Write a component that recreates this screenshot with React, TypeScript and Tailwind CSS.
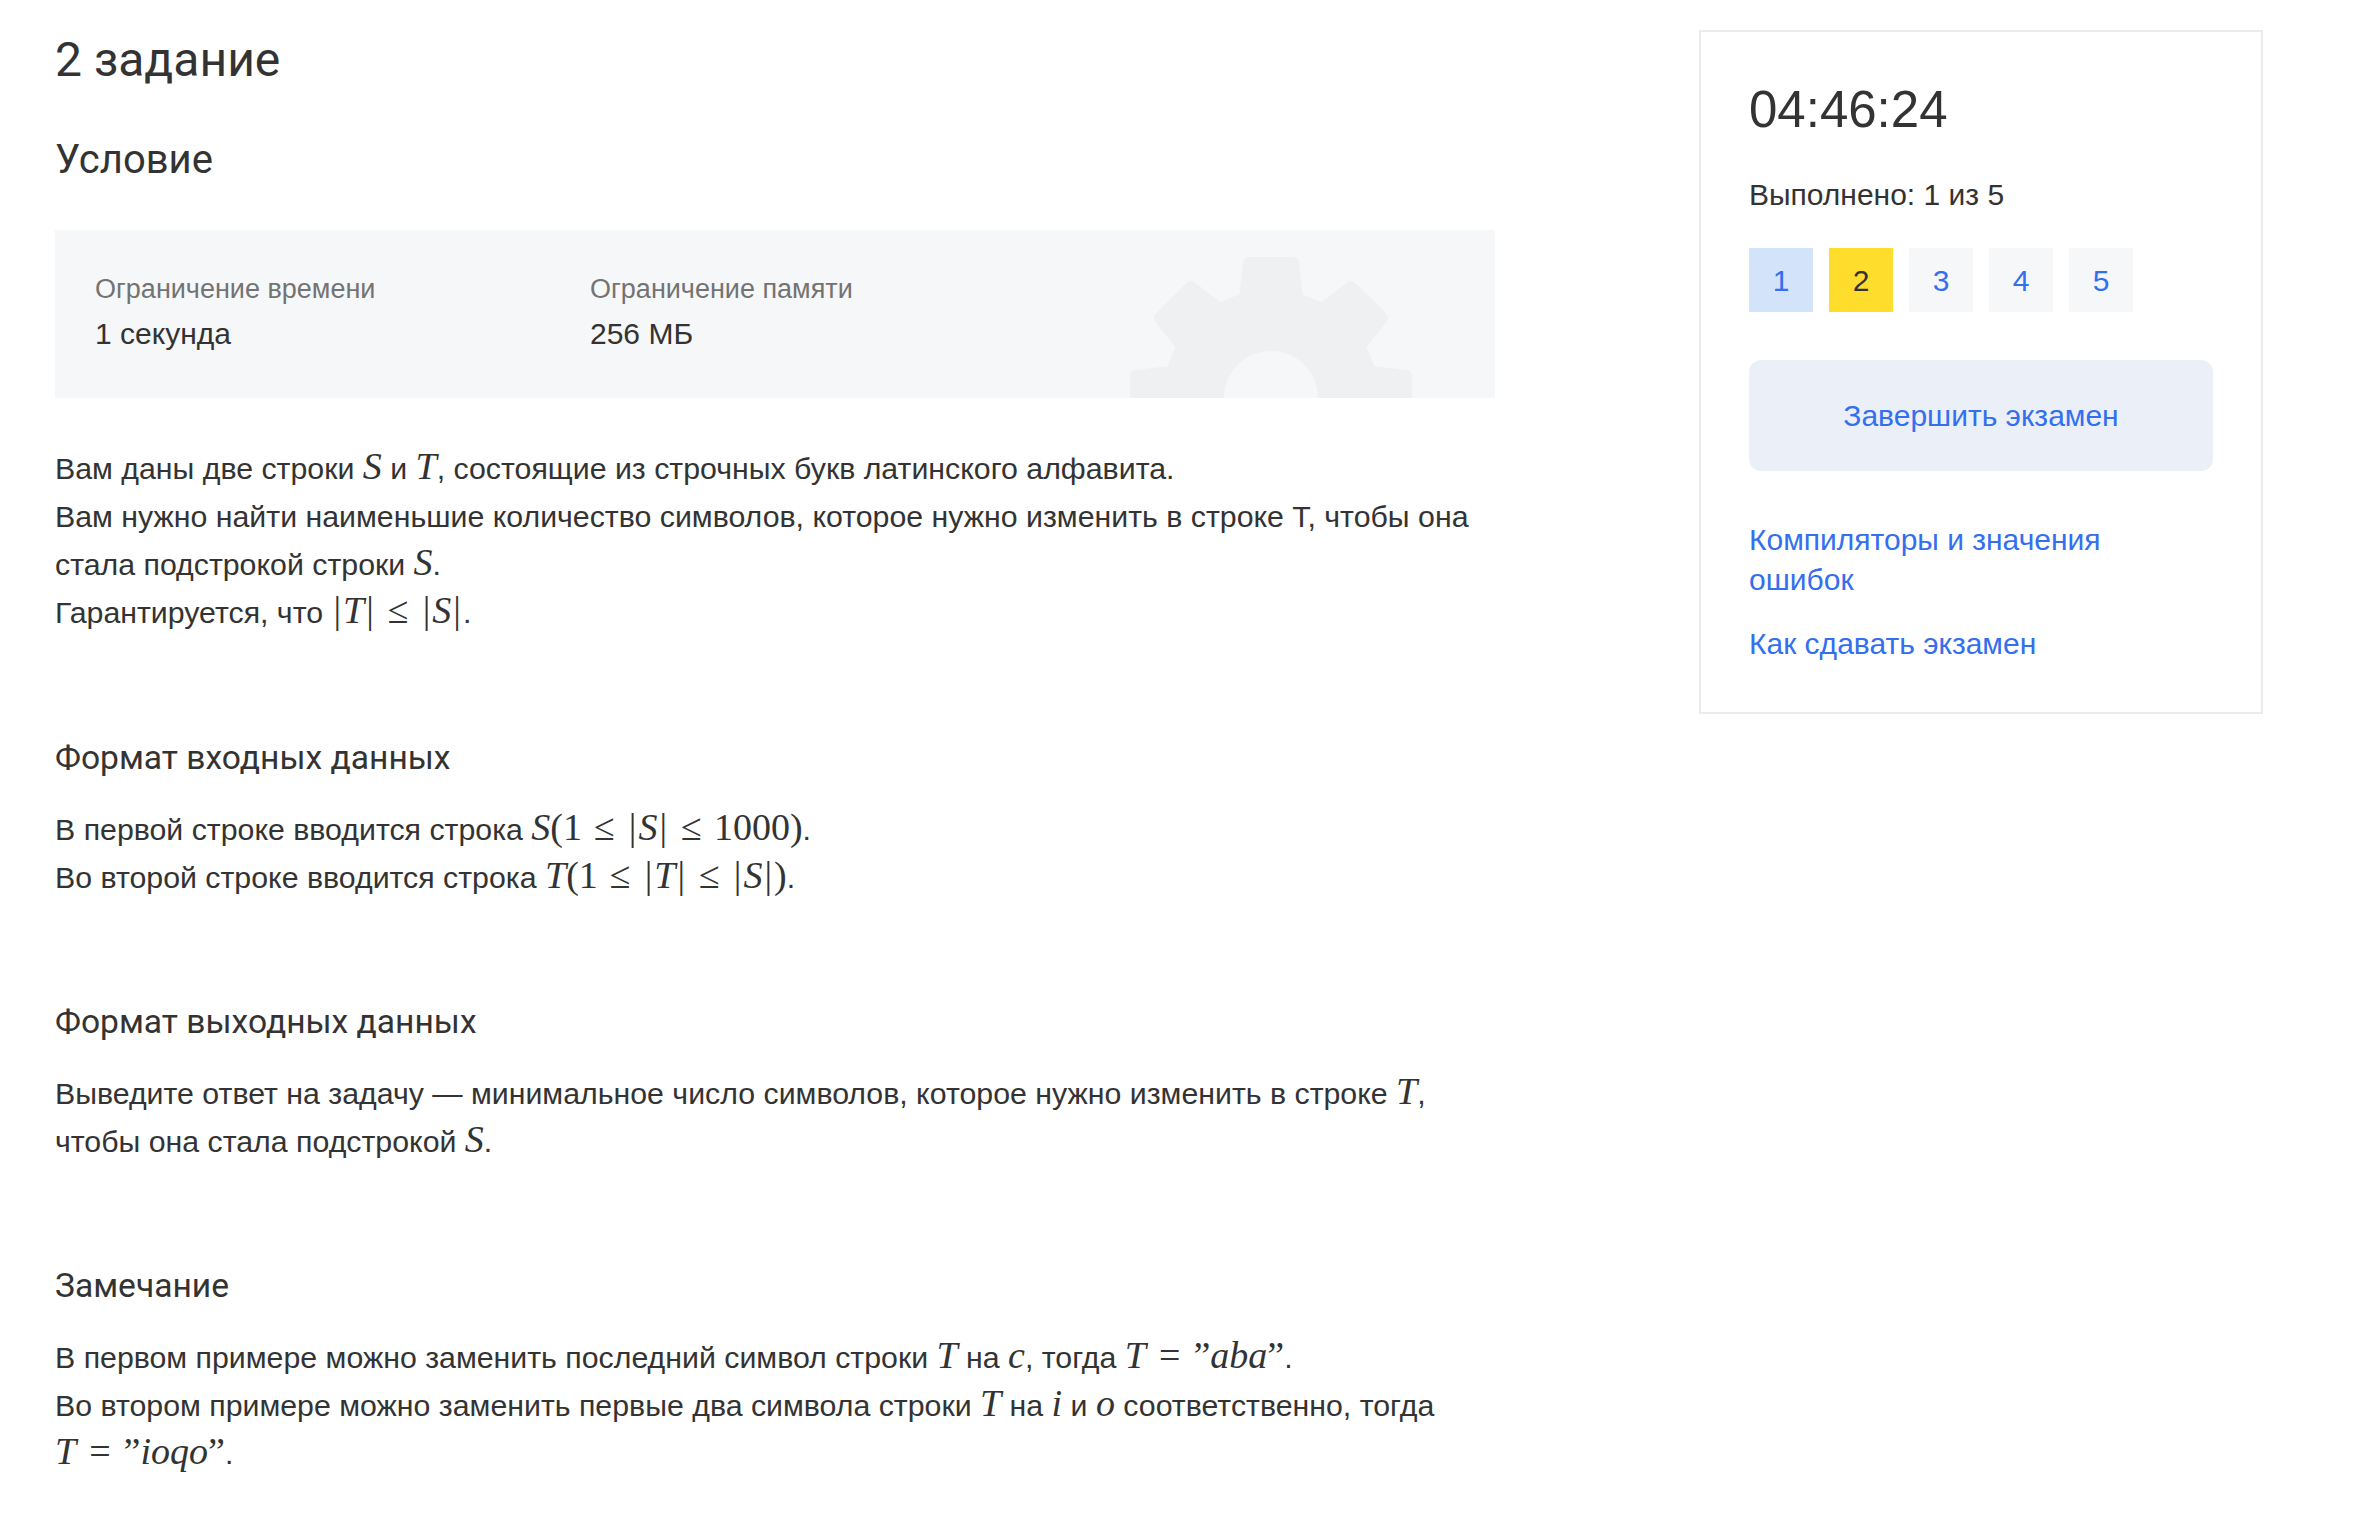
import React from "react";

const M = ({ children }: { children: React.ReactNode }) => (
  <span className="font-['Liberation_Serif',serif] italic text-[38px] leading-none">{children}</span>
);
const R = ({ children, cls = "" }: { children: React.ReactNode; cls?: string }) => (
  <span className={"font-['Liberation_Serif',serif] text-[38px] leading-none " + cls}>{children}</span>
);
const Bar = () => <R cls="mx-[2px]">|</R>;
const Le = () => <R cls="mx-[12px]">≤</R>;
const Eq = () => <R cls="mx-[13px]">=</R>;

function Gear() {
  const teeth = [0, 45, 90, 135, 180, 225, 270, 315];
  return (
    <svg
      className="absolute left-[1071px] top-[23px]"
      width="290"
      height="290"
      viewBox="-145 -145 290 290"
    >
      <circle cx="0" cy="0" r="108" fill="#eff0f2" />
      {teeth.map((a) => (
        <polygon
          key={a}
          points="-26,-100 -22,-135 22,-135 26,-100"
          fill="#eff0f2"
          stroke="#eff0f2"
          strokeWidth="12"
          strokeLinejoin="round"
          transform={`rotate(${a})`}
        />
      ))}
      <circle cx="0" cy="0" r="47" fill="#f6f7f8" />
    </svg>
  );
}

const H3 = ({ children }: { children: React.ReactNode }) => (
  <h3 className="font-['Roboto',sans-serif] text-[33.6px] leading-[48px] text-[#333333] font-normal">{children}</h3>
);

const P = ({ children, cls = "" }: { children: React.ReactNode; cls?: string }) => (
  <p className={"whitespace-nowrap text-[30.3px] leading-[48px] text-[#333333] " + cls}>{children}</p>
);

export default function App() {
  return (
    <div className="min-h-[1519px] w-full bg-white font-['Liberation_Sans',Arial,sans-serif] text-[#333333]">
      <div className="flex gap-[204px] pl-[55px]">
        {/* Left column */}
        <div className="w-[1440px] shrink-0 pb-[40px]">
          <h1 className="mt-[32px] font-['Roboto',sans-serif] text-[48px] leading-[56px] font-normal text-[#333333]">
            2 задание
          </h1>
          <h2 className="mt-[46px] font-['Roboto',sans-serif] text-[40px] leading-[52px] font-normal text-[#333333]">
            Условие
          </h2>

          <div className="relative mt-[44px] h-[168px] overflow-hidden bg-[#f6f7f8]">
            <Gear />
            <div className="relative grid grid-cols-[495px_1fr] pl-[40px] pt-[41px]">
              <div>
                <div className="text-[27px] leading-[36px] text-[#737373]">Ограничение времени</div>
                <div className="mt-[7px] text-[30px] leading-[40px] text-[#333333]">1 секунда</div>
              </div>
              <div>
                <div className="text-[27px] leading-[36px] text-[#737373]">Ограничение памяти</div>
                <div className="mt-[7px] text-[30px] leading-[40px] text-[#333333]">256 МБ</div>
              </div>
            </div>
          </div>

          <P cls="mt-[47px]">
            Вам даны две строки <M>S</M> и <M>T</M>, состоящие из строчных букв латинского алфавита.
            <br />
            Вам нужно найти наименьшие количество символов, которое нужно изменить в строке T, чтобы она
            <br />
            стала подстрокой строки <M>S</M>.
            <br />
            Гарантируется, что <Bar />
            <M>T</M>
            <Bar />
            <Le />
            <Bar />
            <M>S</M>
            <Bar />.
          </P>

          <div className="mt-[97px]">
            <H3>Формат входных данных</H3>
          </div>
          <P cls="mt-[24px]">
            В первой строке вводится строка <M>S</M>
            <R>(1</R>
            <Le />
            <Bar />
            <M>S</M>
            <Bar />
            <Le />
            <R>1000)</R>.
            <br />
            Во второй строке вводится строка <M>T</M>
            <R>(1</R>
            <Le />
            <Bar />
            <M>T</M>
            <Bar />
            <Le />
            <Bar />
            <M>S</M>
            <Bar />
            <R>)</R>.
          </P>

          <div className="mt-[96px]">
            <H3>Формат выходных данных</H3>
          </div>
          <P cls="mt-[24px]">
            Выведите ответ на задачу — минимальное число символов, которое нужно изменить в строке <M>T</M>,
            <br />
            чтобы она стала подстрокой <M>S</M>.
          </P>

          <div className="mt-[96px]">
            <H3>Замечание</H3>
          </div>
          <P cls="mt-[24px]">
            В первом примере можно заменить последний символ строки <M>T</M> на <M>c</M>, тогда <M>T</M>
            <Eq />
            <R>”</R>
            <M>aba</M>
            <R>”</R>.
            <br />
            Во втором примере можно заменить первые два символа строки <M>T</M> на <M>i</M> и <M>o</M>{" "}
            соответственно, тогда
            <br />
            <M>T</M>
            <Eq />
            <R>”</R>
            <M>ioqo</M>
            <R>”</R>.
          </P>
        </div>

        {/* Sidebar */}
        <aside className="mt-[30px] w-[564px] shrink-0 self-start border-2 border-[#ebebeb] px-[48px] pt-[48px] pb-[48px]">
          <div className="text-[51px] leading-[60px] text-[#333333]">04:46:24</div>
          <div className="mt-[35px] text-[30px] leading-[40px] text-[#333333]">Выполнено: 1 из 5</div>
          <div className="mt-[33px] flex gap-[16px]">
            <div className="flex h-[64px] w-[64px] items-center justify-center bg-[#d2e3fa] text-[30px] text-[#336fee]">1</div>
            <div className="flex h-[64px] w-[64px] items-center justify-center bg-[#ffdd2d] text-[30px] text-[#333333]">2</div>
            <div className="flex h-[64px] w-[64px] items-center justify-center bg-[#f6f7f8] text-[30px] text-[#336fee]">3</div>
            <div className="flex h-[64px] w-[64px] items-center justify-center bg-[#f6f7f8] text-[30px] text-[#336fee]">4</div>
            <div className="flex h-[64px] w-[64px] items-center justify-center bg-[#f6f7f8] text-[30px] text-[#336fee]">5</div>
          </div>
          <button className="mt-[48px] flex h-[111px] w-full items-center justify-center rounded-[12px] bg-[#ebf0f8] text-[30px] text-[#336fee]">
            Завершить экзамен
          </button>
          <div className="mt-[49px] max-w-[400px] text-[30px] leading-[40px] text-[#336fee]">
            Компиляторы и значения ошибок
          </div>
          <div className="mt-[24px] text-[30px] leading-[40px] text-[#336fee]">Как сдавать экзамен</div>
        </aside>
      </div>
    </div>
  );
}
